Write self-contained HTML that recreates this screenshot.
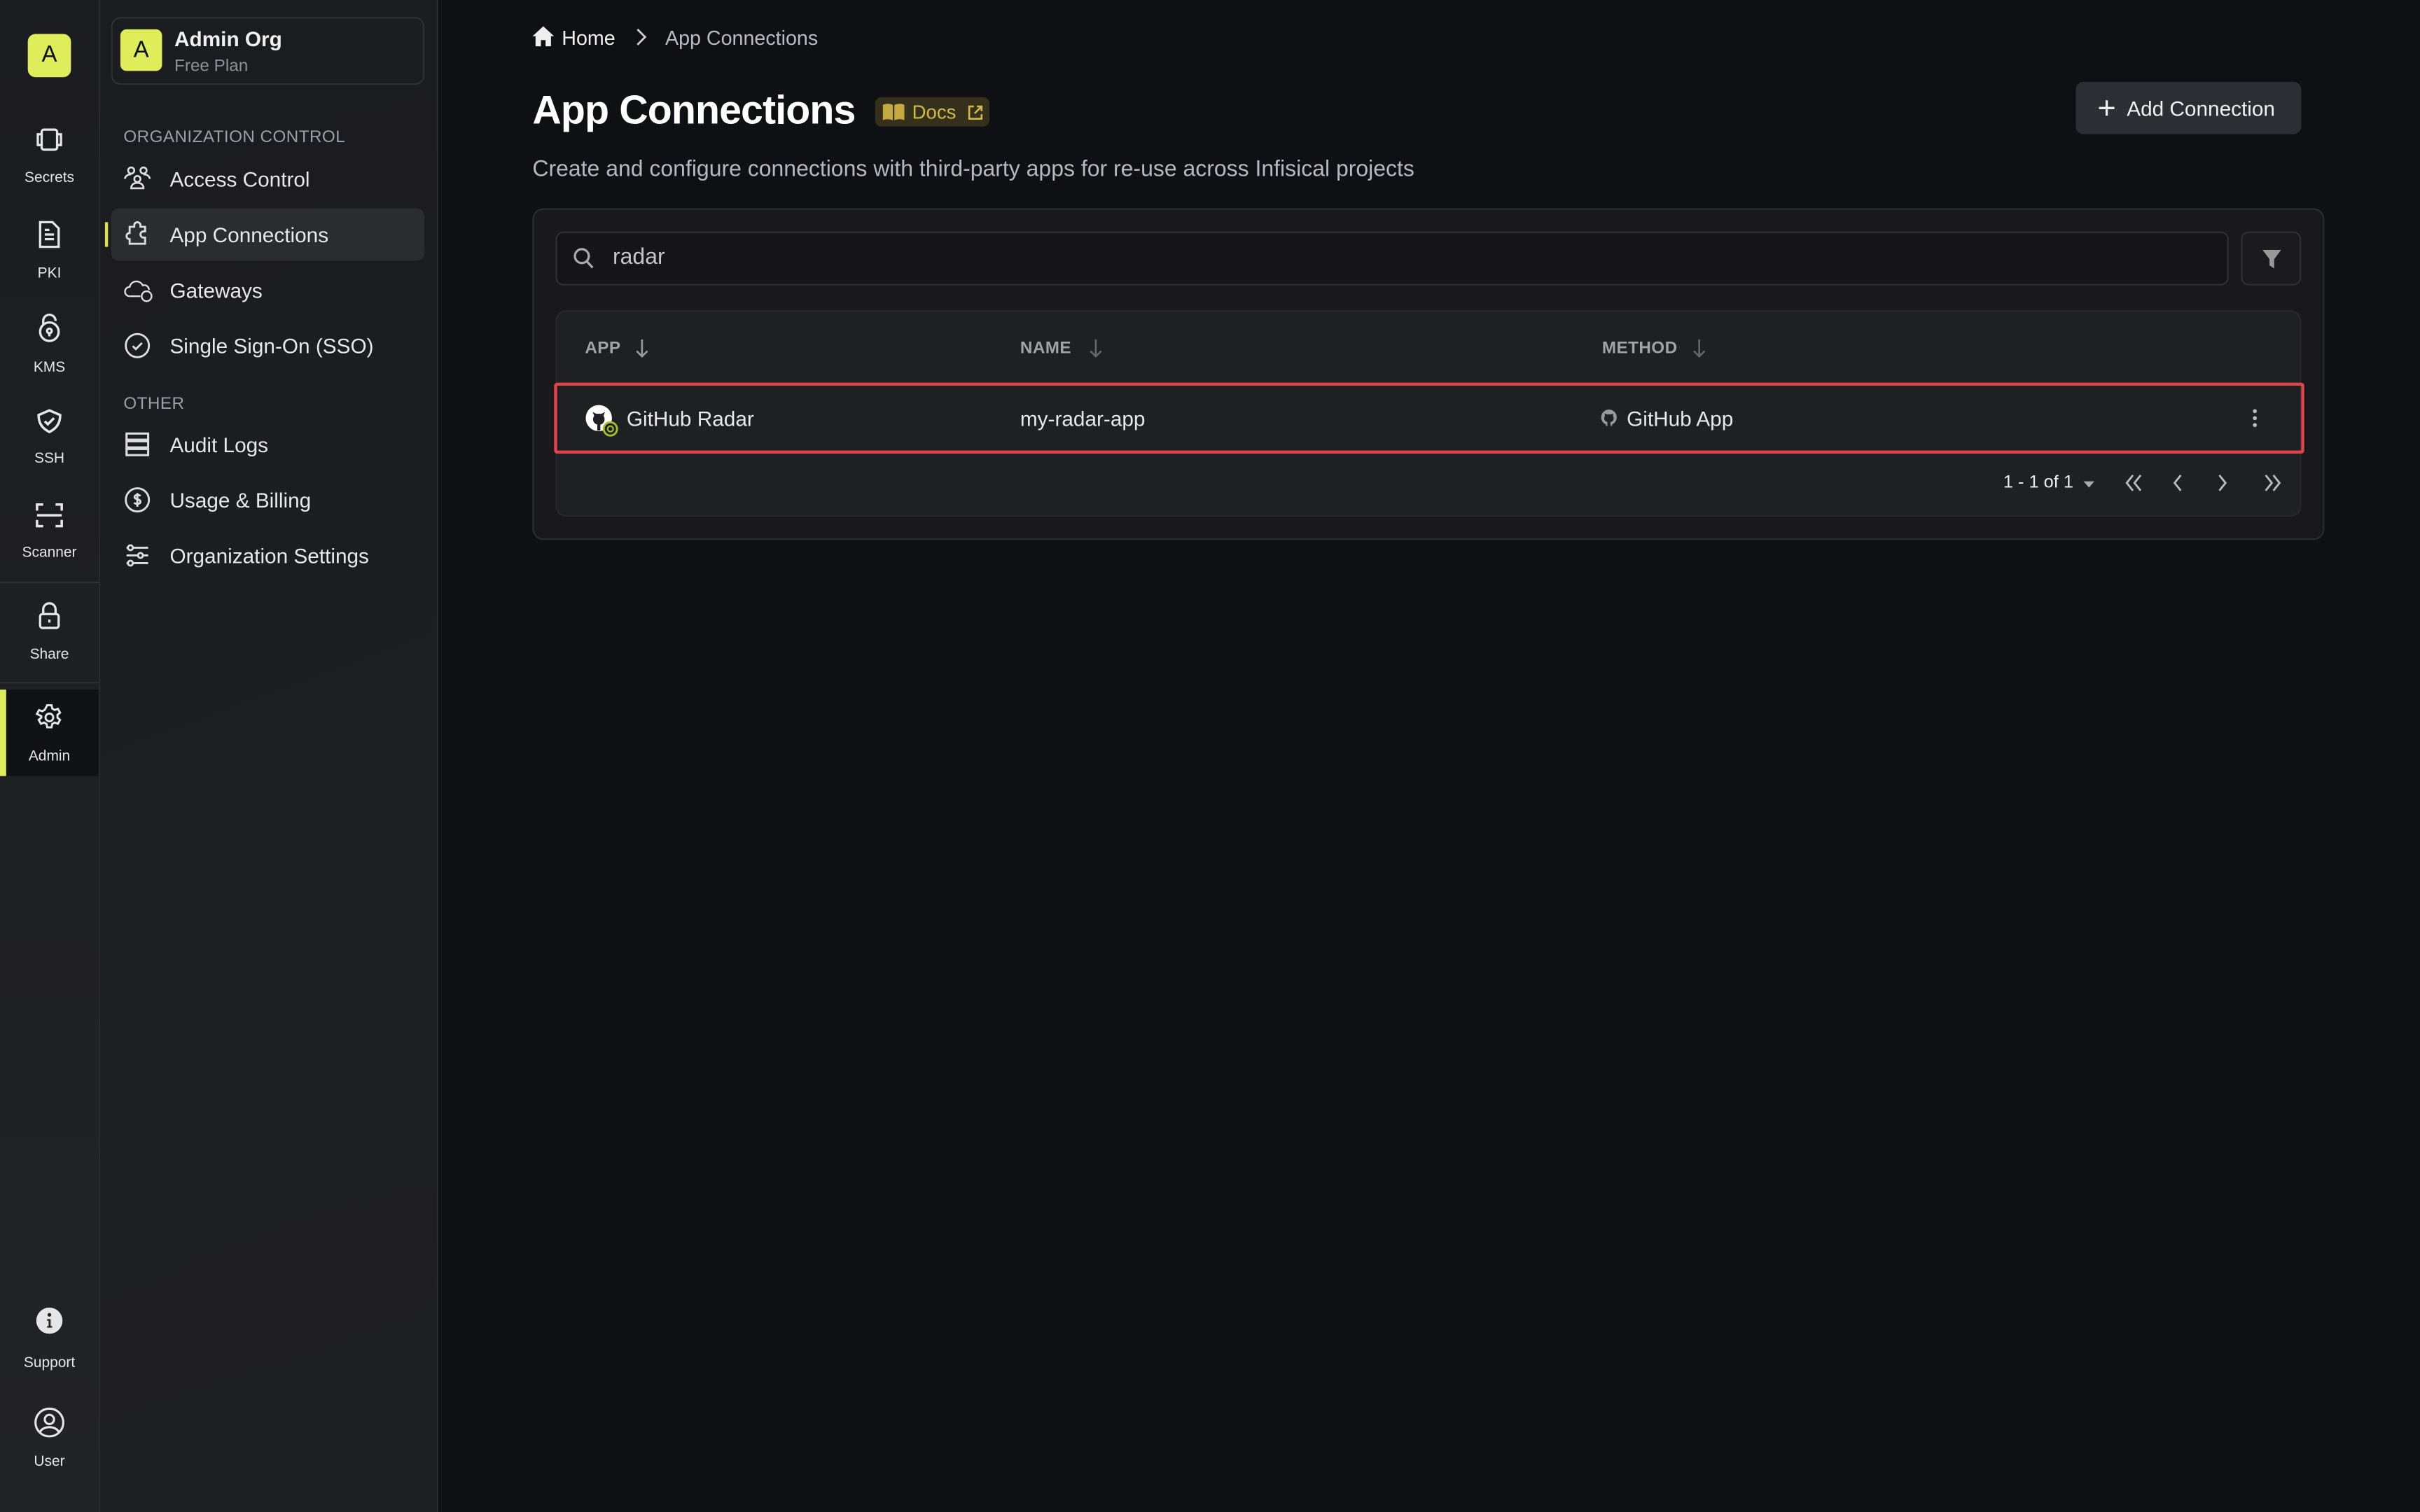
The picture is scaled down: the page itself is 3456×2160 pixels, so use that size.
<!DOCTYPE html>
<html><head><meta charset="utf-8"><style>
*{box-sizing:border-box;margin:0;padding:0}
html,body{width:3456px;height:2160px;overflow:hidden;background:#0f1014}
#s{position:absolute;left:0;top:0;width:1568px;height:980px;transform:scale(2.20408);transform-origin:0 0;font-family:"Liberation Sans",sans-serif;color:#e8e8ea;background:#0f1014}
.a{position:absolute}
.rail{left:0;top:0;width:65px;height:980px;background:linear-gradient(#1b1c1f,#222326);border-right:1px solid #2a2b2f}
.ri{position:absolute;left:0;width:64px;text-align:center;font-size:9.5px;color:#e6e6e6}
.ri svg{display:block;margin:0 auto 10px}
.side{left:65px;top:0;width:219px;height:980px;background:linear-gradient(160deg,#1b1c1f,#1e1f22);border-right:1px solid #2a2b2f}
.sec{position:absolute;left:80px;font-size:11px;color:#9aa0a8;letter-spacing:.2px}
.it{position:absolute;left:72px;width:203px;height:34px;border-radius:5px;font-size:13.5px;color:#e8e8ea;line-height:35px;padding-left:38px}
.it svg{position:absolute;left:8px;top:8px}
.th{position:absolute;top:220px;font-size:11px;font-weight:bold;color:#a0a3a8;letter-spacing:.2px}
</style></head><body><div id="s">
<div class="a rail"></div>
<div class="a" style="left:18px;top:22px;width:28px;height:28px;background:#e0ed5a;border-radius:5px;color:#111;font-size:15px;text-align:center;line-height:28px">A</div>
<div class="ri" style="top:82px"><svg width="20" height="18" viewBox="0 0 20 18" fill="none" stroke="#e6e6e6" stroke-width="1.5"><rect x="5" y="2" width="10" height="13" rx="1.5"/><path d="M5 5H2.5v7H5M15 5h2.5v7H15"/></svg>Secrets</div>
<div class="ri" style="top:142px"><svg width="18" height="20" viewBox="0 0 18 20" fill="none" stroke="#e6e6e6" stroke-width="1.5"><path d="M3 2h8l4 4v12H3z M6 10h6M6 13h6M6 7h3"/></svg>PKI</div>
<div class="ri" style="top:202px"><svg width="18" height="21" viewBox="0 0 18 21" fill="none" stroke="#e6e6e6" stroke-width="1.5"><path d="M5 8V6a4 4 0 0 1 8 0"/><circle cx="9" cy="13" r="6"/><circle cx="9" cy="12.5" r="1.5"/><path d="M9 14v2"/></svg>KMS</div>
<div class="ri" style="top:264px"><svg width="20" height="18" viewBox="0 0 20 18" fill="none" stroke="#e6e6e6" stroke-width="1.6"><path d="M10 2l7 3c0 6-3 9-7 11C6 14 3 11 3 5z"/><path d="M7 9l2 2 4-4"/></svg>SSH</div>
<div class="ri" style="top:325px"><svg width="20" height="18" viewBox="0 0 20 18" fill="none" stroke="#e6e6e6" stroke-width="1.6"><path d="M2 6V2h4M14 2h4v4M2 12v4h4M14 16h4v-4M2 9h16"/></svg>Scanner</div>
<div class="a" style="left:0;top:377px;width:64px;height:1px;background:#2e2f33"></div>
<div class="ri" style="top:389px"><svg width="18" height="20" viewBox="0 0 18 20" fill="none" stroke="#e6e6e6" stroke-width="1.5"><path d="M5 9V6a4 4 0 0 1 8 0v3"/><rect x="3" y="9" width="12" height="9" rx="1.5"/><path d="M9 12.5v2"/></svg>Share</div>
<div class="a" style="left:0;top:442px;width:64px;height:1px;background:#2e2f33"></div>
<div class="a" style="left:0;top:447px;width:64px;height:56px;background:#111215"></div>
<div class="a" style="left:0;top:447px;width:4px;height:56px;background:#e0ed5a"></div>
<div class="ri" style="top:455px"><svg width="20" height="20" viewBox="0 0 24 24" fill="none" stroke="#e6e6e6" stroke-width="1.6"><circle cx="12" cy="12" r="3"/><path d="M10.3 2.5h3.4l.5 2.6 1.9 1.1 2.5-.9 1.7 3-2 1.7v2.2l2 1.7-1.7 3-2.5-.9-1.9 1.1-.5 2.6h-3.4l-.5-2.6-1.9-1.1-2.5.9-1.7-3 2-1.7V11L2.3 9.3l1.7-3 2.5.9 1.9-1.1z"/></svg>Admin</div>
<div class="ri" style="top:847px"><svg width="18" height="18" viewBox="0 0 18 18"><circle cx="9" cy="9" r="8.5" fill="#e6e6e6"/><circle cx="9" cy="5.2" r="1.2" fill="#1e1f22"/><path d="M7.5 8h2.3v4.5h1v1H7.5v-1h1V9h-1z" fill="#1e1f22"/></svg><div style="height:3px"></div>Support</div>
<div class="ri" style="top:912px"><svg width="20" height="20" viewBox="0 0 20 20" fill="none" stroke="#e6e6e6" stroke-width="1.4"><circle cx="10" cy="10" r="9"/><circle cx="10" cy="8" r="3"/><path d="M4 16c2-4 10-4 12 0"/></svg>User</div>

<div class="a side"></div>
<div class="a" style="left:72px;top:11px;width:203px;height:44px;border:1px solid #2e2f33;border-radius:6px"></div>
<div class="a" style="left:78px;top:19px;width:27px;height:27px;background:#e0ed5a;border-radius:4px;color:#111;font-size:15px;text-align:center;line-height:27px">A</div>
<div class="a" style="left:113px;top:18px;font-size:13.5px;font-weight:bold;color:#f0f0f0">Admin Org</div>
<div class="a" style="left:113px;top:37px;font-size:11px;color:#8d9097">Free Plan</div>
<div class="sec" style="top:83px">ORGANIZATION CONTROL</div>
<div class="it" style="top:99px"><svg width="18" height="18" viewBox="0 0 18 18" fill="none" stroke="#ddd" stroke-width="1.2"><circle cx="5" cy="3.5" r="2"/><circle cx="13" cy="3.5" r="2"/><circle cx="9" cy="9" r="2"/><path d="M1 9c0-2 2-3 4-3M17 9c0-2-2-3-4-3M5 15c0-2.5 2-3.5 4-3.5s4 1 4 3.5z"/></svg>Access Control</div>
<div class="it" style="top:135px;background:#2b2c30"><svg width="18" height="18" viewBox="0 0 18 18" fill="none" stroke="#ddd" stroke-width="1.3"><path d="M7 3a2 2 0 0 1 4 0v1h3v3h-1a2 2 0 0 0 0 4h1v4H4v-3a2 2 0 0 1-2-2 2 2 0 0 1 2-2V4h3z"/></svg>App Connections</div>
<div class="a" style="left:68px;top:144px;width:2px;height:16px;background:#d6e54f"></div>
<div class="it" style="top:171px"><svg width="20" height="18" viewBox="0 0 20 18" fill="none" stroke="#ddd" stroke-width="1.1"><path d="M4 13a3 3 0 0 1 0-6 4.5 4.5 0 0 1 8.5-1 3 3 0 0 1 4 3"/><circle cx="15" cy="13" r="3.2"/><path d="M4 13h7"/></svg>Gateways</div>
<div class="it" style="top:207px"><svg width="18" height="18" viewBox="0 0 18 18" fill="none" stroke="#ddd" stroke-width="1.3"><circle cx="9" cy="9" r="7.5"/><path d="M6 9.3l2 2 4-4"/></svg>Single Sign-On (SSO)</div>
<div class="sec" style="top:256px">OTHER</div>
<div class="it" style="top:271px"><svg width="18" height="18" viewBox="0 0 18 18" fill="none" stroke="#ddd" stroke-width="1.4"><rect x="2" y="2" width="14" height="4"/><rect x="2" y="7" width="14" height="4"/><rect x="2" y="12" width="14" height="4"/></svg>Audit Logs</div>
<div class="it" style="top:307px"><svg width="18" height="18" viewBox="0 0 18 18" fill="none" stroke="#ddd" stroke-width="1.3"><circle cx="9" cy="9" r="7.5"/><path d="M11 6.5c-.5-.8-3.8-1.2-3.8.7 0 1.8 3.8 1 3.8 3 0 1.8-3.3 1.6-4 .6M9 4.5v9"/></svg>Usage &amp; Billing</div>
<div class="it" style="top:343px"><svg width="18" height="18" viewBox="0 0 18 18" fill="none" stroke="#ddd" stroke-width="1.3"><path d="M2 4h14M2 9h14M2 14h14"/><circle cx="4.5" cy="4" r="1.6" fill="#1d1e21"/><circle cx="11" cy="9" r="1.6" fill="#1d1e21"/><circle cx="4.5" cy="14" r="1.6" fill="#1d1e21"/></svg>Organization Settings</div>

<svg class="a" style="left:344px;top:16px" width="16" height="15" viewBox="0 0 16 15"><path d="M8 1L1 7.5h2V14h3.5V10h3v4H13V7.5h2z" fill="#eee"/></svg>
<div class="a" style="left:364px;top:17px;font-size:13px;color:#f0f0f0">Home</div>
<svg class="a" style="left:410px;top:18px" width="10" height="12" viewBox="0 0 10 12"><path d="M3 1l5 5-5 5" fill="none" stroke="#ccc" stroke-width="1.3"/></svg>
<div class="a" style="left:431px;top:17px;font-size:13px;color:#b8bcc2">App Connections</div>
<div class="a" style="left:345px;top:56px;font-size:26px;font-weight:bold;color:#fff;letter-spacing:-.4px">App Connections</div>
<div class="a" style="left:567px;top:63px;width:74px;height:19px;background:#34301c;border-radius:4px;color:#d4b94a;font-size:12.5px;line-height:20px;padding-left:24px">Docs
<svg class="a" style="left:5px;top:4px" width="14" height="11" viewBox="0 0 14 11"><path d="M0 1c2-1 4-1 6.5 0v10C4 10 2 10 0 11zM14 1c-2-1-4-1-6.5 0v10c2.5-1 4.5-1 6.5 0z" fill="#c4a93f"/></svg>
<svg class="a" style="left:60px;top:5px" width="10" height="10" viewBox="0 0 10 10" fill="none" stroke="#d4b94a" stroke-width="1.2"><path d="M4 1H1v8h8V6M6 1h3v3M9 1L4.5 5.5"/></svg></div>
<div class="a" style="left:345px;top:102px;font-size:14.5px;color:#b4b8c0">Create and configure connections with third-party apps for re-use across Infisical projects</div>
<div class="a" style="left:1345px;top:53px;width:146px;height:34px;background:#2d2e33;border-radius:5px;font-size:13.5px;color:#f0f0f0;line-height:35px;padding-left:33px">Add Connection
<svg class="a" style="left:14px;top:11px" width="12" height="12" viewBox="0 0 12 12"><path d="M6 1v10M1 6h10" stroke="#eee" stroke-width="1.5"/></svg></div>

<div class="a" style="left:345px;top:135px;width:1161px;height:215px;background:#19191c;border:1px solid #2b2c30;border-radius:7px"></div>
<div class="a" style="left:360px;top:150px;width:1084px;height:35px;background:#151518;border:1px solid #2e2f33;border-radius:5px"></div>
<svg class="a" style="left:371px;top:160px" width="14" height="15" viewBox="0 0 14 15" fill="none" stroke="#aaa" stroke-width="1.5"><circle cx="6" cy="6" r="4.5"/><path d="M9.3 9.5L13 13.5"/></svg>
<div class="a" style="left:397px;top:159px;font-size:14.5px;color:#c4c6cc">radar</div>
<div class="a" style="left:1452px;top:150px;width:39px;height:35px;border:1px solid #2e2f33;border-radius:5px;background:#1b1b1e"></div>
<svg class="a" style="left:1465px;top:161px" width="14" height="14" viewBox="0 0 14 14"><path d="M1 1h12L8.5 7v6L5.5 11V7z" fill="#999"/></svg>

<div class="a" style="left:360px;top:201px;width:1131px;height:134px;background:#1f2024;border:1px solid #27282c;border-radius:7px"></div>
<div class="th" style="left:379px">APP</div>
<svg class="a" style="left:411px;top:219px" width="10" height="13" viewBox="0 0 10 13" fill="none" stroke="#999" stroke-width="1.2"><path d="M5 1v11M1.5 8.5L5 12l3.5-3.5"/></svg>
<div class="th" style="left:661px">NAME</div>
<svg class="a" style="left:705px;top:219px" width="10" height="13" viewBox="0 0 10 13" fill="none" stroke="#666" stroke-width="1.2"><path d="M5 1v11M1.5 8.5L5 12l3.5-3.5"/></svg>
<div class="th" style="left:1038px">METHOD</div>
<svg class="a" style="left:1096px;top:219px" width="10" height="13" viewBox="0 0 10 13" fill="none" stroke="#666" stroke-width="1.2"><path d="M5 1v11M1.5 8.5L5 12l3.5-3.5"/></svg>

<div class="a" style="left:359px;top:248px;width:1134px;height:46px;border:2.5px solid #e0444b;border-radius:2px"></div>
<svg class="a" style="left:379px;top:262px" width="22" height="22" viewBox="0 0 22 22"><circle cx="9" cy="9" r="8.5" fill="#fff"/><path d="M5 5l1 2.5c-1 1.5-1 3 0 4.5 1 1 2 1.2 2 1.2V17h2v-3.8s1 0 2-1.2c1-1.5 1-3 0-4.5L13 5l-2.3 1.2h-3.4z" fill="#1f2024"/><circle cx="16.5" cy="16" r="4.3" fill="#1f2024" stroke="#a5be2a" stroke-width="1.3"/><circle cx="16.5" cy="16" r="1.8" fill="none" stroke="#a5be2a" stroke-width="1"/></svg>
<div class="a" style="left:406px;top:264px;font-size:13.5px;color:#e8e8ea">GitHub Radar</div>
<div class="a" style="left:661px;top:264px;font-size:13.5px;color:#e8e8ea">my-radar-app</div>
<svg class="a" style="left:1037px;top:265px" width="11" height="12" viewBox="0 0 11 12"><path d="M5.5 0.5a5 5 0 0 0-2 9.6V11h1V8.5S3 8.3 2.6 7c-.4-1 0-2 .3-2.3L2.7 3 4 3.6h3L8.3 3 8.1 4.7c.3.3.7 1.3.3 2.3C8 8.3 6.5 8.5 6.5 8.5V11h1v-.9a5 5 0 0 0-2-9.6z" fill="#999"/></svg>
<div class="a" style="left:1054px;top:264px;font-size:13.5px;color:#e8e8ea">GitHub App</div>
<svg class="a" style="left:1458px;top:264px" width="6" height="14" viewBox="0 0 6 14"><circle cx="3" cy="2.5" r="1.3" fill="#bbb"/><circle cx="3" cy="7" r="1.3" fill="#bbb"/><circle cx="3" cy="11.5" r="1.3" fill="#bbb"/></svg>

<div class="a" style="left:1298px;top:307px;font-size:11.5px;color:#eee">1 - 1 of 1</div>
<svg class="a" style="left:1349px;top:311px" width="9" height="6" viewBox="0 0 9 6"><path d="M1 1h7L4.5 5z" fill="#aaa"/></svg>
<svg class="a" style="left:1376px;top:306px" width="110" height="14" viewBox="0 0 110 14" fill="none" stroke="#bbb" stroke-width="1.3"><path d="M6 2L2 7l4 5M11 2L7 7l4 5M37 2l-4 5 4 5M62 2l4 5-4 5M92 2l4 5-4 5M97 2l4 5-4 5"/></svg>
</div></body></html>
